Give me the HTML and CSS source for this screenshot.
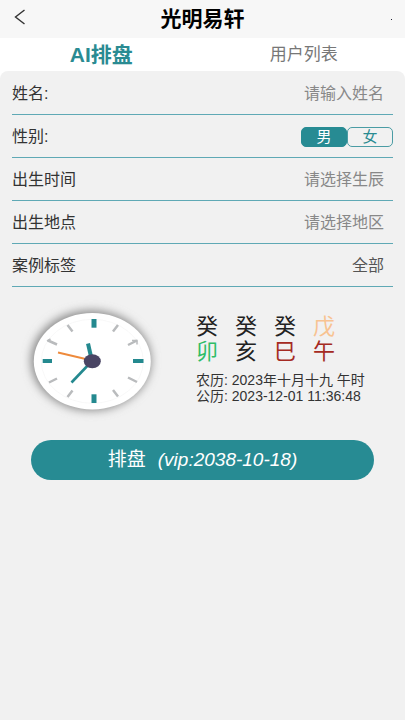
FILE: index.html
```html
<!DOCTYPE html>
<html lang="zh-CN">
<head>
<meta charset="utf-8">
<meta name="viewport" content="width=device-width, initial-scale=1">
<title>光明易轩</title>
<link rel="stylesheet" href="styles.css">
</head>
<body>
<header class="topbar">
  <button class="back" type="button" aria-label="返回">
    <svg width="12" height="16" viewBox="0 0 12 16"><path d="M10.5 1 L1.5 8 L10.5 15" fill="none" stroke="#333" stroke-width="1.4"/></svg>
  </button>
  <h1 class="title">光明易轩</h1>
  <span class="dot"></span>
</header>
<nav class="tabs">
  <a class="tab tab-active" href="#chart">AI排盘</a>
  <a class="tab" href="#users">用户列表</a>
</nav>
<main class="panel">
  <form>
    <div class="row">
      <label for="name">姓名:</label>
      <input class="field" id="name" type="text" placeholder="请输入姓名">
    </div>
    <div class="row" role="radiogroup" aria-labelledby="sex">
      <span id="sex">性别:</span>
      <div class="switch">
        <label class="option"><input type="radio" name="sex" checked><span>男</span></label>
        <label class="option"><input type="radio" name="sex"><span>女</span></label>
      </div>
    </div>
    <div class="row">
      <label for="birth">出生时间</label>
      <input class="field" id="birth" type="text" placeholder="请选择生辰" readonly>
    </div>
    <div class="row">
      <label for="place">出生地点</label>
      <input class="field" id="place" type="text" placeholder="请选择地区" readonly>
    </div>
    <div class="row">
      <label for="tag">案例标签</label>
      <select class="field" id="tag"><option>全部</option></select>
    </div>
    <section class="now">
      <svg class="clock" viewBox="0 0 150 130" role="img" aria-label="时钟">
        <defs><filter id="shade" x="-20%" y="-20%" width="140%" height="140%"><feGaussianBlur stdDeviation="5"/></filter></defs>
        <ellipse cx="71" cy="65.5" rx="60" ry="50" fill="#888" filter="url(#shade)"/>
        <ellipse cx="72.3" cy="66.3" rx="58.5" ry="48.2" fill="#fff"/>
        <ellipse cx="72.3" cy="66.3" rx="51" ry="42" fill="none" stroke="#f5f5f5" stroke-width="0.7"/>
        <g fill="#24898f">
          <rect x="71.5" y="24" width="5" height="8.7"/>
          <rect x="71.5" y="99.3" width="5" height="8.7"/>
          <rect x="22.7" y="64" width="9.3" height="4"/>
          <rect x="113" y="64" width="10.5" height="4"/>
        </g>
        <path d="M47.5 30 L52.5 36.5M98 30 L93 36.5M28 45.5 L37 49.5M108 50 L117 45.5M29 87.5 L37 83.5M108 82.5 L117 87M47.5 102 L52.5 95.5M93 95 L98 101.5" stroke="#b9bbbd" stroke-width="2.5"/>
        <path d="M27 46 l3.5 -2 M112 45.5 l5 0 0 4" stroke="#b9bbbd" stroke-width="1.5" fill="none"/>
        <path d="M68 48.5 L72 66" stroke="#24898f" stroke-width="4"/>
        <path d="M51.5 87.5 L72 66" stroke="#24898f" stroke-width="2.6"/>
        <path d="M38 57.5 L72 65.5" stroke="#ee8a3c" stroke-width="1.8"/>
        <ellipse cx="72.3" cy="66.2" rx="8.5" ry="7" fill="#4a4564"/>
      </svg>
      <div class="info">
        <div class="pillars">
          <span>癸</span><span>癸</span><span>癸</span><span class="earth">戊</span>
          <span class="wood">卯</span><span>亥</span><span class="fire">巳</span><span class="fire">午</span>
        </div>
        <p class="date">农历: 2023年十月十九 午时</p>
        <p class="date">公历: 2023-12-01 11:36:48</p>
      </div>
    </section>
    <button class="submit" type="button"><span>排盘</span><em>(vip:2038-10-18)</em></button>
  </form>
</main>
</body>
</html>
```
FILE: styles.css
```css
* {
  box-sizing: border-box;
}

body {
  margin: 0;
  min-height: 100vh;
  display: flex;
  flex-direction: column;
  background: #fff;
  color: #333;
  font: 16px/20px "Liberation Sans", "Noto Sans CJK SC", sans-serif;
}

button,
input,
select {
  font: inherit;
}

.topbar {
  display: grid;
  grid-template-columns: 48px 1fr 48px;
  align-items: center;
  height: 38px;
  background: #f7f7f7;
}

.back {
  display: flex;
  padding: 0 0 4px 14px;
  border: 0;
  background: none;
}

.title {
  margin: 0;
  text-align: center;
  font-size: 21px;
  line-height: 24px;
  color: #000;
}

.dot {
  justify-self: end;
  width: 1px;
  height: 1px;
  margin-right: 13px;
  background: #223;
}

.tabs {
  display: grid;
  grid-template-columns: 1fr 1fr;
  height: 33px;
}

.tab {
  display: flex;
  align-items: center;
  justify-content: center;
  font-size: 17px;
  color: #777;
  text-decoration: none;
}

.tab-active {
  font-size: 21px;
  font-weight: bold;
  color: #2a8b92;
}

.panel {
  flex: 1;
  padding: 1px 12px 0;
  border-radius: 8px 8px 0 0;
  background: #f1f1f1;
}

.row {
  display: flex;
  align-items: center;
  justify-content: space-between;
  height: 43px;
  padding-top: 2px;
  border-bottom: 1px solid #5fa9b5;
}

.field {
  width: 160px;
  padding: 0;
  margin: 0 9px 0 0;
  border: 0;
  outline: 0;
  background: none;
  text-align: right;
  text-align-last: right;
  color: #555;
  appearance: none;
}

.field::placeholder {
  color: #888;
  opacity: 1;
}

.switch {
  display: flex;
}

.option input {
  position: absolute;
  opacity: 0;
}

.option span {
  display: block;
  width: 46px;
  height: 20px;
  border: 1px solid #4a9ca4;
  border-radius: 5px;
  text-align: center;
  font-size: 15px;
  line-height: 18px;
  color: #2a8b92;
}

.option input:checked + span {
  background: #278b93;
  border-color: #278b93;
  color: #fff;
}

.now {
  display: flex;
  gap: 26px;
  padding: 8px 0 0 8px;
}

.clock {
  flex: none;
  width: 150px;
  height: 130px;
}

.info {
  padding-top: 19px;
}

.pillars {
  display: grid;
  grid-template-columns: repeat(4, 39px);
  margin-bottom: 8px;
  font-size: 22px;
  line-height: 25px;
  color: #222;
}

.earth {
  color: #f8c392;
}

.wood {
  color: #2fbd68;
}

.fire {
  color: #a52a22;
}

.date {
  margin: 0;
  font-size: 14px;
  line-height: 16px;
  white-space: nowrap;
}

.submit {
  display: flex;
  align-items: center;
  justify-content: center;
  gap: 12px;
  width: calc(100% - 38px);
  height: 40px;
  margin: 15px 19px 0;
  border: 0;
  border-radius: 20px;
  background: #278b93;
  font-size: 19px;
  color: #fff;
}
```
